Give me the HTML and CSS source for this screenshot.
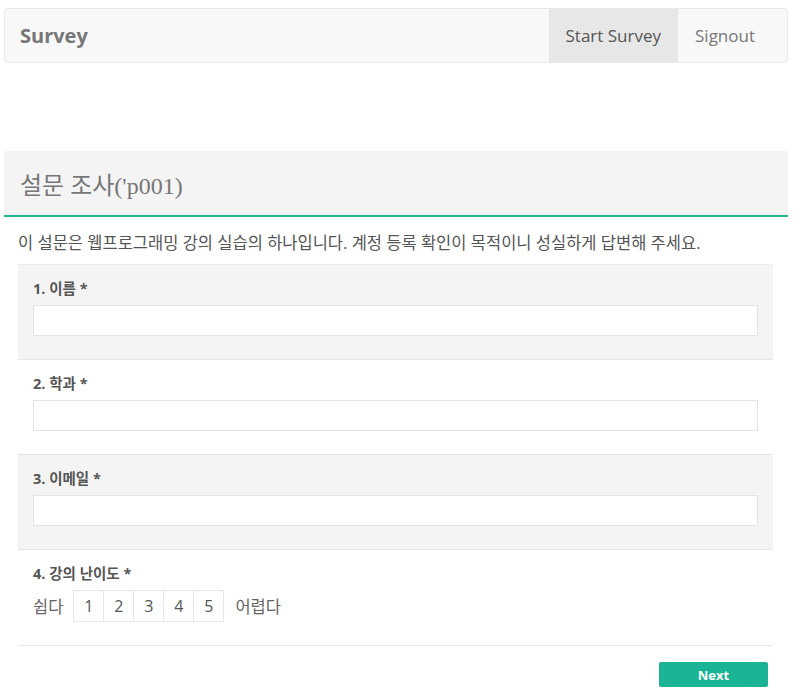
FILE: index.html
```html
<!DOCTYPE html>
<html lang="ko">
<head>
  <meta charset="UTF-8">
  <meta name="viewport" content="width=device-width, initial-scale=1.0">
  <title>Survey</title>
  <link rel="stylesheet" href="styles.css">
</head>
<body>
  <nav class="navbar">
    <a class="brand" href="#">Survey</a>
    <ul class="nav-links">
      <li class="active"><a href="#">Start Survey</a></li>
      <li><a href="#">Signout</a></li>
    </ul>
  </nav>

  <div class="survey">
    <div class="survey-head">
      <h2>설문 조사('p001)</h2>
    </div>
    <div class="survey-body">
      <p class="desc">이 설문은 웹프로그래밍 강의 실습의 하나입니다. 계정 등록 확인이 목적이니 성실하게 답변해 주세요.</p>
      <form id="survey-form">
        <div class="question">
          <label for="q1">1. 이름 <span class="req">*</span></label>
          <input type="text" id="q1" name="q1">
        </div>
        <div class="question">
          <label for="q2">2. 학과 <span class="req">*</span></label>
          <input type="text" id="q2" name="q2">
        </div>
        <div class="question">
          <label for="q3">3. 이메일 <span class="req">*</span></label>
          <input type="text" id="q3" name="q3">
        </div>
        <div class="question">
          <label>4. 강의 난이도 <span class="req">*</span></label>
          <div class="rating">
            <span class="rating-text">쉽다</span>
            <div class="scale">
              <button type="button">1</button>
              <button type="button">2</button>
              <button type="button">3</button>
              <button type="button">4</button>
              <button type="button">5</button>
            </div>
            <span class="rating-text">어렵다</span>
          </div>
        </div>
        <div class="actions">
          <button type="submit" class="next-btn">Next</button>
        </div>
      </form>
    </div>
  </div>
</body>
</html>
```

FILE: styles.css
```css
body {
  margin: 0;
  padding: 8px 12px 0 4px;
  font-family: "Open Sans", "Noto Sans CJK KR", sans-serif;
  color: #555;
  background: #fff;
}
.navbar {
  display: flex;
  justify-content: space-between;
  height: 53px;
  background-color: #f8f8f8;
  border: 1px solid #e7e7e7;
  border-radius: 4px;
}
.brand {
  padding: 0 15px;
  line-height: 53px;
  font-size: 20px;
  font-weight: bold;
  color: #777;
  text-decoration: none;
}
.nav-links {
  display: flex;
  margin: 0 15px 0 0;
  padding: 0;
  list-style: none;
}
.nav-links a {
  display: block;
  padding: 0 17px;
  line-height: 53px;
  font-size: 17px;
  color: #777;
  text-decoration: none;
}
.nav-links .active a {
  background-color: #e7e7e7;
  color: #555;
}
.survey {
  margin-top: 88px;
}
.survey-head {
  height: 64px;
  padding: 0 16px;
  background-color: #f4f4f4;
  border-bottom: 2px solid #26b294;
  display: flex;
  align-items: center;
}
.survey-head h2 {
  margin: 0;
  font-family: "Liberation Serif", "Noto Sans CJK KR", serif;
  font-size: 24px;
  font-weight: normal;
  color: #777;
}
.survey-body {
  padding: 0 15px 0 14px;
}
.desc {
  margin: 0;
  padding: 15px 0 0;
  height: 32px;
  font-size: 16.5px;
  line-height: 22px;
  color: #555;
}
.question {
  padding: 14px 15px 23px;
  border-bottom: 1px solid #e6e6e6;
}
.question:first-child {
  border-top: 1px solid #ececec;
}
.question:nth-child(odd) {
  background-color: #f4f4f4;
}
.question label {
  display: block;
  margin-bottom: 6px;
  font-size: 14.5px;
  line-height: 20px;
  font-weight: bold;
  color: #555;
}
.req {
  font-weight: bold;
}
.question input {
  display: block;
  box-sizing: border-box;
  width: 100%;
  height: 31px;
  margin: 0;
  border: 1px solid #e4e4e4;
  background: #fff;
  font-size: 14px;
}
.rating {
  display: flex;
  align-items: center;
  height: 32px;
}
.rating-text {
  font-size: 16.5px;
  color: #666;
}
.scale {
  display: flex;
  margin: 0 12px 0 10px;
}
.scale button {
  box-sizing: border-box;
  width: 31px;
  height: 32px;
  margin: 0 -1px 0 0;
  padding: 0;
  border: 1px solid #e6e6e6;
  background: #fff;
  font-family: "Open Sans", sans-serif;
  font-size: 16px;
  color: #555;
  cursor: pointer;
}
.actions {
  display: flex;
  justify-content: flex-end;
  padding: 16px 5px 0 0;
}
.next-btn {
  width: 109px;
  height: 25px;
  padding: 0;
  border: none;
  border-radius: 2px;
  background-color: #1ab394;
  color: #fff;
  font-family: "Open Sans", sans-serif;
  font-size: 13px;
  font-weight: bold;
  cursor: pointer;
}
.next-btn:hover {
  background-color: #18a689;
}
```
